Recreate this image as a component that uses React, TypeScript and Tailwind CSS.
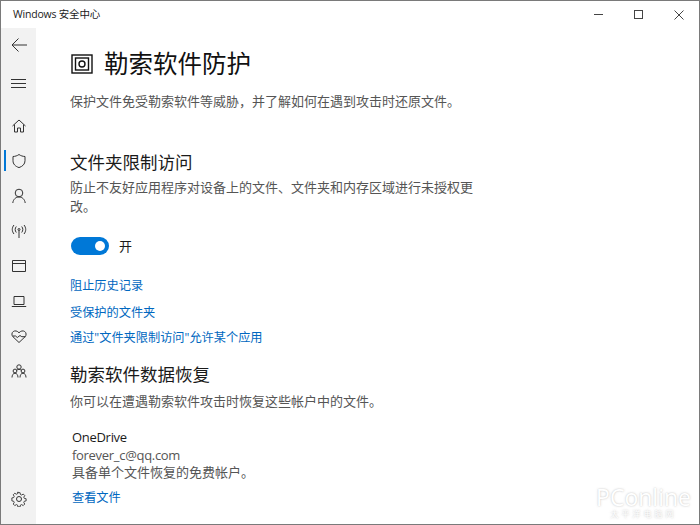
import { useState } from 'react';

const ink = '#333333';

function NavIcon({ children }: { children: React.ReactNode }) {
  return (
    <svg width="16" height="16" viewBox="0 0 16 16" fill="none" stroke={ink} strokeWidth="1" strokeLinejoin="round">
      {children}
    </svg>
  );
}

const navItems = [
  { key: 'home', icon: <path d="M1.500 8 8 2l6.500 6M3.500 6.500V14h3v-4h3v4h3V6.500" /> },
  {
    key: 'shield',
    icon: <path d="M8 1.500c1.800 1.300 3.800 1.900 6 2v4.200c0 3.300-2.200 5.600-6 6.900-3.800-1.300-6-3.600-6-6.900V3.500c2.200-.1 4.200-.7 6-2Z" />,
  },
  { key: 'user', icon: <><circle cx="8" cy="5" r="3.800" /><path d="M1.800 15c.4-3.600 2.900-6 6.200-6s5.800 2.400 6.200 6" /></> },
  {
    key: 'wifi',
    icon: <><circle cx="8" cy="6.500" r="1" /><path d="M8 7.500V15M5.300 3.500c-1.500 1.800-1.500 4.200 0 6M10.700 3.500c1.500 1.800 1.500 4.200 0 6M3 2c-2.300 2.800-2.300 6.200 0 9M13 2c2.300 2.800 2.300 6.200 0 9" /></>,
  },
  { key: 'browser', icon: <><rect x="1.500" y="2.500" width="13" height="11" /><path d="M1.500 5.500h13" /></> },
  { key: 'laptop', icon: <><rect x="3" y="3.500" width="10" height="8" /><path d="M.8 13.500h14.400" /></> },
  {
    key: 'heart',
    icon: <path d="M8 14.500 2 8.800C.4 7.200.6 4.700 2.300 3.500c1.700-1.100 4-.7 5.700 1.300 1.700-2 4-2.400 5.700-1.300 1.700 1.200 1.900 3.700.3 5.300L8 14.500ZM1.500 8h3l1.800 1.500L9 7.500l1.800 1.200h3.700" />,
  },
  {
    key: 'family',
    icon: <><circle cx="8" cy="4" r="2.200" /><circle cx="4" cy="8" r="1.900" /><circle cx="12" cy="8" r="1.900" /><path d="M1 14.500c0-2.400 1.200-4.300 3-4.300s3 1.900 3 4.300M9 14.500c0-2.400 1.200-4.300 3-4.300s3 1.900 3 4.300M5.500 7.500C6 6.800 7 6.300 8 6.300s2 .5 2.500 1.200" /></>,
  },
];

function Sidebar() {
  return (
    <aside className="flex w-[35px] shrink-0 flex-col bg-[#f2f2f2]">
      <button type="button" className="flex h-[33px] items-center justify-center">
        <svg width="16" height="14" viewBox="0 0 16 14" fill="none" stroke={ink} strokeWidth="1">
          <path d="M7.500.5 1 7l6.500 6.500M1 7h15" />
        </svg>
      </button>
      <button type="button" className="mt-[5px] flex h-[35px] items-center justify-center">
        <svg width="15" height="10" viewBox="0 0 15 10" fill="none" stroke={ink} strokeWidth="1">
          <path d="M0 .5h15M0 4.500h15M0 8.500h15" />
        </svg>
      </button>
      <div className="mt-[7px] flex flex-col">
        {navItems.map((item) => (
          <div key={item.key} className="relative flex h-[35px] items-center justify-center">
            {item.key === 'shield' ? <span className="absolute left-[3px] top-[7px] h-[21px] w-[2px] bg-[#0078d7]" /> : null}
            <NavIcon>{item.icon}</NavIcon>
          </div>
        ))}
      </div>
      <div className="mt-auto flex h-[50px] items-center justify-center">
        <svg width="16" height="16" viewBox="0 0 16 16" fill="none" stroke={ink} strokeWidth="1" strokeLinejoin="round">
          <circle cx="8" cy="8" r="2.500" />
          <path d="M6.800 1h2.400l.4 2 1.300.6 1.800-1.100 1.700 1.700-1.100 1.800.6 1.300 2 .4v2.400l-2 .4-.6 1.300 1.100 1.800-1.700 1.700-1.800-1.100-1.300.6-.4 2H6.800l-.4-2-1.300-.6-1.800 1.100-1.700-1.700 1.100-1.800-.6-1.300-2-.4V6.800l2-.4.6-1.300-1.100-1.800 1.700-1.700 1.800 1.100 1.300-.6.4-2Z" transform="translate(.8 .8) scale(.9)" />
        </svg>
      </div>
    </aside>
  );
}

function Link({ children, className }: { children: React.ReactNode; className?: string }) {
  return <div className={`text-[12.200px] leading-[18px] text-[#0067c0] ${className ?? ''}`}>{children}</div>;
}

export default function App() {
  const [on] = useState(true);
  return (
    <div
      className="relative flex h-[525px] w-[700px] flex-col overflow-hidden border border-[#7a7a7a] bg-white"
      style={{ fontFamily: '"Open Sans", "Noto Sans CJK SC", sans-serif' }}
    >
      <header className="flex h-[27px] shrink-0 items-center justify-between">
        <span className="pl-[12px] text-[10.500px] tracking-[-0.2px] text-[#1a1a1a]">Windows 安全中心</span>
        <div className="flex items-center">
          <div className="flex h-[27px] w-[40px] items-center justify-center">
            <svg width="10" height="10" viewBox="0 0 10 10" stroke="#444"><path d="M0 4.500h9" /></svg>
          </div>
          <div className="flex h-[27px] w-[40px] items-center justify-center">
            <svg width="10" height="10" viewBox="0 0 10 10" fill="none" stroke="#444"><rect x=".5" y=".5" width="8" height="8" /></svg>
          </div>
          <div className="flex h-[27px] w-[40px] items-center justify-center">
            <svg width="10" height="10" viewBox="0 0 10 10" stroke="#444"><path d="M.5.500l9 9M9.500.500l-9 9" /></svg>
          </div>
        </div>
      </header>
      <div className="flex min-h-0 flex-1">
        <Sidebar />
        <main className="flex min-w-0 flex-1 flex-col pl-[34px]">
          <div className="mt-[19px] flex items-center gap-[11px] pl-px">
            <svg width="22" height="20" viewBox="0 0 22 20" fill="none" stroke="#111" strokeWidth="1.400">
              <rect x="1" y="1" width="20" height="18" />
              <rect x="4.500" y="4" width="13" height="12" />
              <circle cx="11" cy="10" r="3" />
            </svg>
            <h1 className="text-[24.500px] leading-[34px] text-[#111]">勒索软件防护</h1>
          </div>
          <p className="mt-[10px] text-[13px] leading-[20px] text-[#555]">保护文件免受勒索软件等威胁，并了解如何在遇到攻击时还原文件。</p>

          <h2 className="mt-[38px] text-[17.500px] leading-[26px] text-[#1a1a1a]">文件夹限制访问</h2>
          <p className="mt-[3px] w-[410px] text-[13px] leading-[19px] text-[#555]">防止不友好应用程序对设备上的文件、文件夹和内存区域进行未授权更改。</p>

          <div className="mt-[21px] flex items-center gap-[10px] pl-px">
            <div className={`flex h-[18px] w-[38px] items-center justify-end rounded-full pr-[4px] ${on ? 'bg-[#0078d7]' : ''}`}>
              <span className="h-[10px] w-[10px] rounded-full bg-white" />
            </div>
            <span className="text-[13px] leading-[18px] text-[#1a1a1a]">开</span>
          </div>

          <Link className="mt-[22px]">阻止历史记录</Link>
          <Link className="mt-[9px]">受保护的文件夹</Link>
          <Link className="mt-[7px]">通过"文件夹限制访问"允许某个应用</Link>

          <h2 className="mt-[14px] text-[17.500px] leading-[26px] text-[#1a1a1a]">勒索软件数据恢复</h2>
          <p className="mt-[5px] text-[13px] leading-[18px] text-[#555]">你可以在遭遇勒索软件攻击时恢复这些帐户中的文件。</p>

          <div className="mt-[19px] pl-[2px] text-[13px] leading-[17.500px]">
            <div className="tracking-[-0.3px] text-[#1a1a1a]">OneDrive</div>
            <div className="tracking-[-0.3px] text-[#555]">forever_c@qq.com</div>
            <div className="text-[#555]">具备单个文件恢复的免费帐户。</div>
          </div>
          <Link className="mt-[7px] pl-[2px]">查看文件</Link>
        </main>
      </div>
      <div className="pointer-events-none absolute bottom-[6px] right-[8px] flex flex-col items-center gap-[2px] text-white [text-shadow:0_0_2px_rgba(120,120,120,0.5)]">
        <span className="text-[23px] leading-[20px]">PConline</span>
        <span className="text-[8px] leading-[9px] tracking-[3px]">太平洋电脑网</span>
      </div>
    </div>
  );
}
